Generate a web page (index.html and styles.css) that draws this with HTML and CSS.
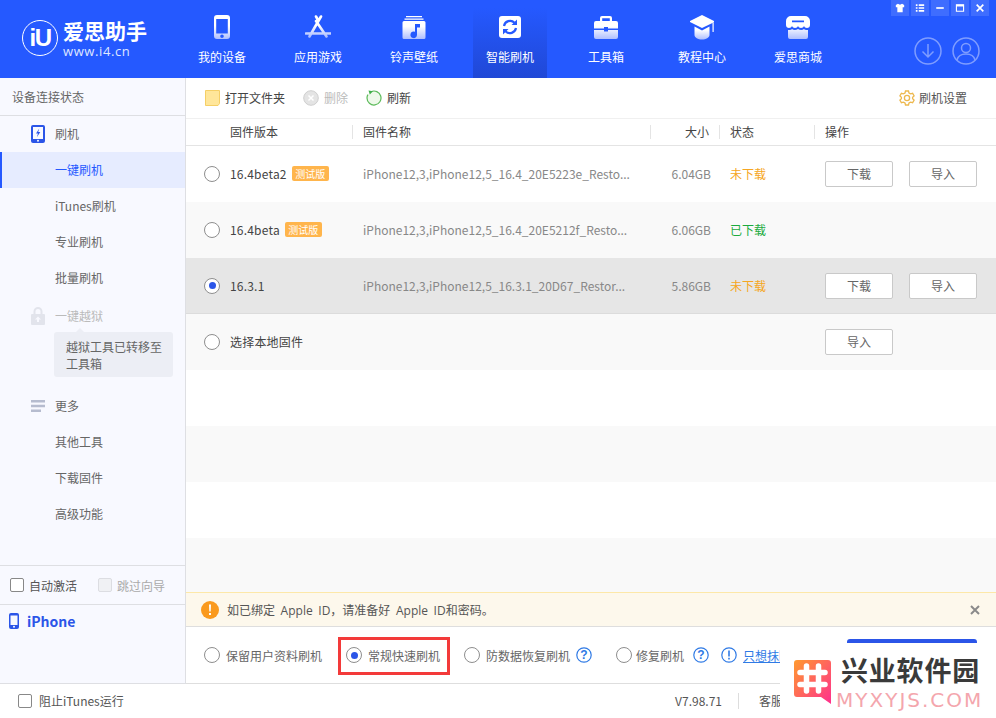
FILE: index.html
```html
<!DOCTYPE html>
<html lang="zh-CN">
<head>
<meta charset="utf-8">
<title>爱思助手</title>
<link rel="stylesheet" href="styles.css">
</head>
<body>
<svg class="defs" width="0" height="0" aria-hidden="true">
  <defs>
    <linearGradient id="navg" x1="0" y1="0" x2="0" y2="1">
      <stop offset="0" stop-color="#ffffff"/>
      <stop offset="0.45" stop-color="#ffffff"/>
      <stop offset="1" stop-color="#aebfff"/>
    </linearGradient>
    <linearGradient id="logog" x1="0" y1="0" x2="1" y2="1">
      <stop offset="0" stop-color="#ff9a2e"/>
      <stop offset="1" stop-color="#ff2f8e"/>
    </linearGradient>
  </defs>
</svg>
<div class="app">
  <header class="topbar">
    <div class="brand">
      <div class="brand-mark"><span>iU</span></div>
      <div class="brand-text">
        <div class="brand-name">爱思助手</div>
        <div class="brand-url">www.i4.cn</div>
      </div>
    </div>
    <nav class="nav">
      <a class="nav-item">
        <svg class="nav-icon" viewBox="0 0 26 26"><path fill="url(#navg)" fill-rule="evenodd" d="M8 1h10a3 3 0 0 1 3 3v18a3 3 0 0 1-3 3H8a3 3 0 0 1-3-3V4a3 3 0 0 1 3-3zm-.8 4v14.500h11.600V5zM13 20.500a1.800 1.800 0 1 0 0 3.600 1.800 1.800 0 0 0 0-3.600z"/></svg>
        <span>我的设备</span>
      </a>
      <a class="nav-item">
        <svg class="nav-icon" viewBox="0 0 26 26"><path fill="none" stroke="url(#navg)" stroke-width="2.600" stroke-linecap="round" d="M11 2.500L13.500 7M16 2.500L4.500 22.500M11 7l10.500 15.500M1 19.500h24.500"/></svg>
        <span>应用游戏</span>
      </a>
      <a class="nav-item">
        <svg class="nav-icon" viewBox="0 0 26 26"><path fill="url(#navg)" fill-rule="evenodd" d="M5 2h16v1.200H5zM3.500 4.500h19v1.200h-19zM3 7h20a1.500 1.500 0 0 1 1.500 1.500v15A1.500 1.500 0 0 1 23 25H3a1.500 1.500 0 0 1-1.500-1.500v-15A1.500 1.500 0 0 1 3 7zm11 3v7.800a3.300 3.300 0 1 0 2 3V13.500h3V10z"/></svg>
        <span>铃声壁纸</span>
      </a>
      <a class="nav-item is-active">
        <svg class="nav-icon" viewBox="0 0 26 26"><rect x="2" y="2" width="22" height="22" rx="3" fill="#fff"/><path fill="none" stroke="#2559ff" stroke-width="2.200" d="M7 12a6.200 6.200 0 0 1 10.500-3.300M19 14a6.200 6.200 0 0 1-10.500 3.300"/><path fill="#2559ff" d="M20 5.500v5.500h-5.500zM6 20.500V15h5.500z"/></svg>
        <span>智能刷机</span>
      </a>
      <a class="nav-item">
        <svg class="nav-icon" viewBox="0 0 26 26"><path fill="url(#navg)" fill-rule="evenodd" d="M9 2h8a2 2 0 0 1 2 2v3h4a2 2 0 0 1 2 2v5.500H15v-1.500h-4v1.500H1V9a2 2 0 0 1 2-2h4V4a2 2 0 0 1 2-2zm.2 2.200V7h7.600V4.200zM1 16h10v1.500h4V16h10v7a2 2 0 0 1-2 2H3a2 2 0 0 1-2-2z"/></svg>
        <span>工具箱</span>
      </a>
      <a class="nav-item">
        <svg class="nav-icon" viewBox="0 0 26 26"><path fill="#fff" d="M13 1l12 6v1.200L13 14 1 8V7z"/><path fill="url(#navg)" d="M5.500 12.500L13 16.500l7.500-4V21c0 2.500-3.500 4.500-7.500 4.500S5.500 23.500 5.500 21zM23.500 9l1.200-.6V18h-1.200z"/></svg>
        <span>教程中心</span>
      </a>
      <a class="nav-item">
        <svg class="nav-icon" viewBox="0 0 26 26"><path fill="url(#navg)" fill-rule="evenodd" d="M6 2h14a5 5 0 0 1 5 5v4c0 1.700-1.300 3-3 3s-2.500-1-3-2c-.5 1-1.500 2-3 2s-2.500-1-3-2c-.5 1-1.500 2-3 2s-2.500-1-3-2c-.5 1-1.300 2-3 2s-3-1.300-3-3V7a5 5 0 0 1 5-5zm1 4.500V8.300h12V6.500zM3 16c2 .3 3.300-.3 4-1 1.500 1.300 4 1.300 6 0 2 1.300 4.500 1.300 6 0 .7.700 2 1.300 4 1v7a2 2 0 0 1-2 2H5a2 2 0 0 1-2-2z"/></svg>
        <span>爱思商城</span>
      </a>
    </nav>
    <div class="win-buttons">
      <button class="win-btn"><svg viewBox="0 0 12 12"><path fill="#fff" d="M3.500 1L1 2.500v2.700h1.800V11h6.400V5.200H11V2.500L8.500 1 6 2.200z"/></svg></button>
      <button class="win-btn"><svg viewBox="0 0 12 12"><path fill="#fff" d="M1 1.500h2v2H1zM4.500 1.500H11v2H4.500zM1 5h2v2H1zM4.500 5H11v2H4.500zM1 8.500h2v2H1zM4.500 8.500H11v2H4.500z"/></svg></button>
      <button class="win-btn"><svg viewBox="0 0 12 12"><path fill="#fff" d="M1.500 5h9v2h-9z"/></svg></button>
      <button class="win-btn"><svg viewBox="0 0 12 12"><path fill="none" stroke="#fff" stroke-width="1.300" d="M1.700 2.200h8.600v7.800H1.700z"/><path fill="#fff" d="M1.500 2h9v2.200h-9z"/></svg></button>
      <button class="win-btn"><svg viewBox="0 0 12 12"><path stroke="#fff" stroke-width="2" d="M2 2l8 8M10 2l-8 8"/></svg></button>
    </div>
    <div class="top-actions">
      <svg class="round-icon" viewBox="0 0 28 28"><circle cx="14" cy="14" r="13" fill="none" stroke="#7f9dff" stroke-width="1.500"/><path fill="none" stroke="#7f9dff" stroke-width="1.500" d="M14 7v13M8.500 14.500L14 20l5.500-5.500"/></svg>
      <svg class="round-icon" viewBox="0 0 28 28"><circle cx="14" cy="14" r="13" fill="none" stroke="#7f9dff" stroke-width="1.500"/><circle cx="14" cy="11" r="4.500" fill="none" stroke="#7f9dff" stroke-width="1.500"/><path fill="none" stroke="#7f9dff" stroke-width="1.500" d="M5 23c1-4 4.500-6 9-6s8 2 9 6"/></svg>
    </div>
  </header>

  <div class="main">
    <aside class="sidebar">
      <div class="side-head">设备连接状态</div>
      <div class="side-item side-group">
        <svg class="side-icon" viewBox="0 0 14 18"><path fill="#2b55e8" fill-rule="evenodd" d="M2 0h10a2 2 0 0 1 2 2v14a2 2 0 0 1-2 2H2a2 2 0 0 1-2-2V2a2 2 0 0 1 2-2zm0 2v12h10V2zm5 12.800a1 1 0 1 0 0 2 1 1 0 0 0 0-2z"/><path fill="#2b55e8" d="M8.300 3.500L5 8.500h2L5.800 12.300 9.300 7H7.200z"/></svg>
        <span>刷机</span>
      </div>
      <div class="side-item is-current">一键刷机</div>
      <div class="side-item">iTunes刷机</div>
      <div class="side-item">专业刷机</div>
      <div class="side-item">批量刷机</div>
      <div class="side-item side-group side-disabled">
        <svg class="side-icon" viewBox="0 0 14 18"><path fill="#e2e4ec" fill-rule="evenodd" d="M7 0a4.500 4.500 0 0 1 4.500 4.500V7H13a1 1 0 0 1 1 1v9a1 1 0 0 1-1 1H1a1 1 0 0 1-1-1V8a1 1 0 0 1 1-1h1.500V4.500A4.500 4.500 0 0 1 7 0zm0 2a2.500 2.500 0 0 0-2.500 2.500V7h5V4.500A2.500 2.500 0 0 0 7 2zm0 7.500L4 12.500h2V15h2v-2.500h2z"/></svg>
        <span>一键越狱</span>
      </div>
      <div class="side-tip">越狱工具已转移至工具箱</div>
      <div class="side-item side-group">
        <svg class="side-icon" viewBox="0 0 14 14"><path fill="#b6bccf" d="M0 1h14v2.400H0zM0 5.800h14v2.400H0zM0 10.600h10v2.400H0z"/></svg>
        <span>更多</span>
      </div>
      <div class="side-item">其他工具</div>
      <div class="side-item">下载固件</div>
      <div class="side-item">高级功能</div>
      <div class="side-spacer"></div>
      <div class="side-checks">
        <label class="check-label"><i class="check"></i>自动激活</label>
        <label class="check-label is-off"><i class="check"></i>跳过向导</label>
      </div>
      <div class="side-device">
        <svg class="device-icon" viewBox="0 0 10 16"><path fill="#2b55e8" fill-rule="evenodd" d="M2 0h6a2 2 0 0 1 2 2v12a2 2 0 0 1-2 2H2a2 2 0 0 1-2-2V2a2 2 0 0 1 2-2zm-.5 2.500v9.500h7V2.500zM5 12.800a1 1 0 1 0 0 2 1 1 0 0 0 0-2z"/></svg>
        <span>iPhone</span>
      </div>
    </aside>

    <section class="content">
      <div class="toolbar">
        <a class="tool">
          <svg class="tool-icon folder" viewBox="0 0 15 16"><path fill="#ffe69a" stroke="#f5cf66" d="M.5.500h14v13l-1.500 2H.5z"/></svg>
          <span>打开文件夹</span>
        </a>
        <a class="tool is-off">
          <svg class="tool-icon" viewBox="0 0 16 16"><circle cx="8" cy="8" r="7.300" fill="#e4e4e4" stroke="#cfcfcf"/><path stroke="#fff" stroke-width="1.500" d="M5.500 5.500l5 5M10.500 5.500l-5 5"/></svg>
          <span>删除</span>
        </a>
        <a class="tool">
          <svg class="tool-icon" viewBox="0 0 16 16"><path fill="#eef9ea" stroke="#5cba5a" stroke-width="1.200" d="M5 1.700A7 7 0 1 1 1 8a7 7 0 0 1 .9-3.400"/><path fill="#3fae4a" d="M2.500 .4L7 1.200 3.800 4.600z"/></svg>
          <span>刷新</span>
        </a>
        <a class="tool tool-right">
          <svg class="tool-icon" viewBox="0 0 16 16"><path fill="none" stroke="#edb84e" stroke-width="1.300" d="M6.500 1h3l.5 2 1.600.9 2-.6 1.500 2.600-1.500 1.400v1.400l1.500 1.400-1.500 2.600-2-.6-1.600.9-.5 2h-3l-.5-2-1.600-.9-2 .6L.9 10.100l1.500-1.400V7.300L.9 5.900l1.500-2.600 2 .6L6 3z"/><circle cx="8" cy="8" r="2.600" fill="none" stroke="#edb84e" stroke-width="1.300"/></svg>
          <span>刷机设置</span>
        </a>
      </div>

      <div class="thead">
        <div class="th"><span class="th-pad">固件版本</span></div>
        <div class="th th-sep">固件名称</div>
        <div class="th th-sep th-right">大小</div>
        <div class="th th-sep">状态</div>
        <div class="th th-sep">操作</div>
      </div>

      <div class="rows">
        <div class="row">
          <div class="cell cell-ver"><i class="radio"></i><span>16.4beta2</span><em class="tag">测试版</em></div>
          <div class="cell cell-name">iPhone12,3,iPhone12,5_16.4_20E5223e_Resto...</div>
          <div class="cell cell-size">6.04GB</div>
          <div class="cell cell-status warn">未下载</div>
          <div class="cell cell-ops"><button class="btn">下载</button><button class="btn">导入</button></div>
        </div>
        <div class="row alt">
          <div class="cell cell-ver"><i class="radio"></i><span>16.4beta</span><em class="tag">测试版</em></div>
          <div class="cell cell-name">iPhone12,3,iPhone12,5_16.4_20E5212f_Resto...</div>
          <div class="cell cell-size">6.06GB</div>
          <div class="cell cell-status ok">已下载</div>
          <div class="cell cell-ops"></div>
        </div>
        <div class="row selected">
          <div class="cell cell-ver"><i class="radio is-on"></i><span>16.3.1</span></div>
          <div class="cell cell-name">iPhone12,3,iPhone12,5_16.3.1_20D67_Restor...</div>
          <div class="cell cell-size">5.86GB</div>
          <div class="cell cell-status warn">未下载</div>
          <div class="cell cell-ops"><button class="btn">下载</button><button class="btn">导入</button></div>
        </div>
        <div class="row alt">
          <div class="cell cell-ver"><i class="radio"></i><span>选择本地固件</span></div>
          <div class="cell cell-name"></div>
          <div class="cell cell-size"></div>
          <div class="cell cell-status"></div>
          <div class="cell cell-ops"><button class="btn">导入</button></div>
        </div>
        <div class="row"></div>
        <div class="row alt"></div>
        <div class="row"></div>
        <div class="row alt"></div>
      </div>

      <div class="notice">
        <svg class="notice-icon" viewBox="0 0 18 18"><circle cx="9" cy="9" r="9" fill="#fa9a1e"/><path fill="#fff" d="M8 3.500h2l-.3 7H8.300zM8 12h2v2H8z"/></svg>
        <span class="notice-text">如已绑定 Apple ID，请准备好 Apple ID和密码。</span>
        <svg class="notice-close" viewBox="0 0 10 10"><path stroke="#8a8a8a" stroke-width="2" d="M1 1l8 8M9 1l-8 8"/></svg>
      </div>

      <div class="modes">
        <label class="mode"><i class="radio"></i>保留用户资料刷机</label>
        <label class="mode mode-picked"><i class="radio is-on"></i>常规快速刷机</label>
        <label class="mode mode-data"><i class="radio"></i>防数据恢复刷机</label>
        <svg class="help" viewBox="0 0 16 16"><circle cx="8" cy="8" r="7.200" fill="none" stroke="#2f7ae5" stroke-width="1.200"/><text x="8" y="12" text-anchor="middle" class="help-glyph">?</text></svg>
        <label class="mode mode-fix"><i class="radio"></i>修复刷机</label>
        <svg class="help" viewBox="0 0 16 16"><circle cx="8" cy="8" r="7.200" fill="none" stroke="#2f7ae5" stroke-width="1.200"/><text x="8" y="12" text-anchor="middle" class="help-glyph">?</text></svg>
        <svg class="help help-info" viewBox="0 0 16 16"><circle cx="8" cy="8" r="7.200" fill="none" stroke="#2f7ae5" stroke-width="1.200"/><path fill="#2f7ae5" d="M7.200 3.500h1.600v6H7.200zM7.200 10.700h1.600v1.700H7.200z"/></svg>
        <a class="erase-link">只想抹除数据</a>
        <div class="flash-btn"></div>
      </div>
    </section>
  </div>

  <footer class="statusbar">
    <label class="check-label foot-check"><i class="check"></i>阻止iTunes运行</label>
    <span class="version">V7.98.71</span>
    <span class="service">客服</span>
  </footer>

  <div class="watermark">
    <svg class="wm-logo" viewBox="0 0 37 44">
      <path fill="url(#logog)" d="M3 0h31a3 3 0 0 1 3 3v41l-10-7H3a3 3 0 0 1-3-3V3a3 3 0 0 1 3-3z"/>
      <path stroke="#fff" stroke-width="5.500" stroke-linecap="round" fill="none" d="M12.500 6v25M24.500 6v25M6 12.500h25M6 24.500h25"/>
    </svg>
    <div class="wm-text">
      <div class="wm-cn">兴业软件园</div>
      <div class="wm-en">MYXYJS.COM</div>
    </div>
  </div>
</div>
</body>
</html>
```
FILE: styles.css
```css
* { box-sizing: border-box; }
html, body { margin: 0; padding: 0; }
body {
  width: 996px;
  height: 718px;
  overflow: hidden;
  font-family: "Noto Sans CJK SC", "Noto Sans", sans-serif;
  font-size: 12px;
  color: #444;
  background: #fff;
}
i, em { font-style: normal; }
.defs { position: absolute; }
.app { position: relative; display: flex; flex-direction: column; width: 996px; height: 718px; overflow: hidden; }

/* header */
.topbar { position: relative; display: flex; flex: 0 0 78px; height: 78px; background: #2559ff; color: #fff; }
.brand { display: flex; flex: 0 0 185px; align-items: flex-start; padding: 20px 0 0 22px; }
.brand-mark {
  display: flex; align-items: center; justify-content: center;
  width: 36px; height: 36px; border: 1.500px solid #fff; border-radius: 50%;
  font: 700 24px/1 "Liberation Sans", sans-serif; letter-spacing: -1.500px;
}
.brand-text { margin-left: 5px; }
.brand-name { height: 25px; font-family: "Liberation Sans", "Noto Sans CJK SC", sans-serif; font-size: 21px; font-weight: 700; line-height: 24px; }
.brand-url { font: 13px/13px "Open Sans", sans-serif; letter-spacing: .6px; color: #dfe6ff; }
.nav { display: flex; gap: 22px; }
.nav-item { display: flex; flex-direction: column; align-items: center; width: 74px; height: 78px; padding-top: 14px; font-size: 12px; color: #fff; }
.nav-item.is-active { background: linear-gradient(#2559ff 10%, #2048d6); }
.nav-icon { display: block; width: 26px; height: 26px; margin-bottom: 8px; }
.nav-item span { line-height: 18px; }
.win-buttons { position: absolute; top: 0; right: 7px; display: flex; gap: 2px; }
.win-btn { display: flex; align-items: center; justify-content: center; width: 18px; height: 16px; padding: 0; border: 0; background: #3f6dff; }
.win-btn svg { width: 10px; height: 10px; }
.top-actions { position: absolute; top: 37px; right: 16px; display: flex; gap: 10px; }
.round-icon { display: block; width: 28px; height: 28px; }

/* layout */
.main { display: flex; flex: 0 0 606px; height: 606px; }

/* sidebar */
.sidebar { display: flex; flex-direction: column; flex: 0 0 186px; background: #f8f9ff; border-right: 1px solid #dedfe3; border-bottom: 1px solid #dedfe3; color: #666; }
.side-head { flex: 0 0 37px; padding: 0 12px; line-height: 37px; font-size: 12px; border-bottom: 1px solid #dedfe3; color: #666; }
.side-item { position: relative; flex: 0 0 36px; padding: 1px 0 0 55px; line-height: 34px; }
.side-group { display: flex; align-items: center; padding-top: 0; }
.side-icon { position: absolute; left: 31px; top: 9px; width: 14px; height: 18px; }
.is-current { background: #e6ecff; color: #2559ff; border-left: 2px solid #2559ff; padding-left: 53px; }
.side-disabled { margin-top: 2px; color: #bbb; }
.side-tip { position: relative; flex: 0 0 45px; width: 119px; margin: -2px 0 11px 54px; padding: 6px 10px 0 12px; line-height: 17px; background: #eceef5; border-radius: 3px; }
.side-tip::before { content: ""; position: absolute; left: 22px; top: -4px; border: 4px solid transparent; border-top: 0; border-bottom-color: #eceef5; }
.side-spacer { flex: 1; }
.side-checks { display: flex; flex: 0 0 40px; align-items: center; gap: 21px; padding-left: 10px; border-top: 1px solid #dedfe3; border-bottom: 1px solid #dedfe3; }
.check-label { display: flex; align-items: center; gap: 5px; color: #555; }
.check-label.is-off { color: #aaa; }
.check { display: block; width: 14px; height: 14px; background: #fff; border: 1px solid #888; border-radius: 2px; }
.is-off .check { background: #f0f1f4; border-color: #dcdde2; }
.side-device { display: flex; flex: 0 0 78px; align-items: flex-start; gap: 8px; padding: 7px 0 0 9px; font-size: 14px; font-weight: 700; line-height: 18px; color: #2b55e8; }
.device-icon { width: 10px; height: 16px; margin-top: 1px; }

/* content */
.content { position: relative; display: flex; flex-direction: column; flex: 1; min-width: 0; }
.toolbar { display: flex; flex: 0 0 41px; align-items: center; gap: 18px; padding: 0 29px 1px 19px; border-bottom: 1px solid #f0f0f0; }
.tool { display: flex; align-items: center; gap: 5px; color: #444; }
.tool.is-off { color: #bbb; }
.tool-right { margin-left: auto; gap: 4px; color: #555; }
.tool-icon { display: block; width: 16px; height: 16px; }
.tool-icon.folder { width: 15px; }
.thead { display: grid; grid-template-columns: 166px 298px 69px 95px 1fr; flex: 0 0 27px; align-items: center; border-bottom: 1px solid #e4e4e4; color: #444; padding-bottom: 1px; }
.th { padding-left: 10px; line-height: 14px; }
.th-pad { padding-left: 34px; }
.th-sep { border-left: 1px solid #e4e4e4; height: 14px; }
.th-right { padding-right: 10px; text-align: right; }
.rows { flex: 1; min-height: 0; overflow: hidden; }
.row { display: grid; grid-template-columns: 166px 298px 69px 95px 1fr; align-items: center; height: 56px; padding-bottom: 1px; }
.row.alt { background: #f9f9f9; }
.row.selected { padding-bottom: 0; background: #e6e6e6; border-bottom: 1px solid #dcdcdc; }
.cell-ver { display: flex; align-items: center; padding-left: 18px; color: #444; }
.cell-ver span { letter-spacing: .2px; }
.cell-ver .radio { margin-right: 10px; }
.tag { margin-left: 5px; width: 37px; height: 15px; background: #ffb54c; border-radius: 2px; color: #fff; font-size: 10px; line-height: 15px; text-align: center; }
.cell-name { padding-left: 11px; color: #888; white-space: nowrap; }
.cell-size { padding-right: 8px; text-align: right; color: #888; }
.cell-status { padding-left: 11px; }
.warn { color: #f5a623; }
.ok { color: #1cab3f; }
.cell-ops { display: flex; gap: 16px; padding-left: 11px; }
.btn { width: 68px; height: 26px; padding: 0; background: #fff; border: 1px solid #c9c9c9; border-radius: 2px; color: #666; font: inherit; }
.radio { position: relative; display: block; flex: none; width: 16px; height: 16px; background: #fff; border: 1px solid #8e8e8e; border-radius: 50%; }
.radio.is-on::after { content: ""; position: absolute; left: 3.500px; top: 3.500px; width: 7px; height: 7px; background: #2b55e8; border-radius: 50%; }

.notice { display: flex; flex: 0 0 35px; align-items: center; padding: 0 16px 0 15px; background: #fdf8ec; border-top: 1px solid #fde8a8; border-bottom: 1px solid #dedede; }
.notice-icon { width: 18px; height: 18px; margin-right: 8px; }
.notice-text { flex: 1; font-family: "Open Sans", "Noto Sans CJK SC", sans-serif; word-spacing: 2.500px; color: #555; }
.notice-close { width: 10px; height: 10px; }
.modes { position: relative; display: flex; flex: 0 0 57px; align-items: center; padding: 0 0 0 18px; border-bottom: 1px solid #dedede; color: #666; white-space: nowrap; overflow: hidden; }
.mode { display: flex; align-items: center; gap: 6px; }
.mode-picked { width: 112px; height: 38px; margin: 2px 14px 0 16px; padding: 0 0 2px 5px; border: 3px solid #f33a3a; }
.mode-data { margin-right: 6px; }
.help { flex: none; width: 16px; height: 16px; }
.help-glyph { font: 700 12px "Liberation Sans", sans-serif; fill: #2f7ae5; }
.mode-fix { margin: 0 9px 0 24px; gap: 4px; }
.help-info { margin-left: 12px; }
.erase-link { margin-left: 6px; color: #2f7ae5; text-decoration: underline; }
.flash-btn { position: absolute; left: 661px; top: 12px; width: 130px; height: 40px; background: #2b55e8; border-radius: 3px; }

/* footer */
.statusbar { display: flex; flex: 1; align-items: center; padding: 0 0 1px 18px; background: #fff; }
.foot-check { gap: 7px; }
.version { margin-left: auto; padding-right: 16px; border-right: 1px solid #ddd; color: #555; line-height: 16px; }
.service { margin: 0 213px 0 20px; color: #555; }

/* watermark overlay */
.watermark { position: absolute; left: 780px; top: 643px; display: flex; width: 216px; height: 75px; padding: 17px 0 0 14px; background: #fff; }
.wm-logo { flex: none; width: 37px; height: 44px; }
.wm-text { margin-left: 10px; }
.wm-cn { height: 25px; font-family: "Liberation Sans", "Noto Sans CJK SC", sans-serif; font-size: 27px; font-weight: 700; line-height: 24px; color: #3a3a3a; letter-spacing: .8px; white-space: nowrap; }
.wm-en { margin: 5px 0 0 -5px; font: 20px/20px "DejaVu Sans", sans-serif; color: #f4a6ad; letter-spacing: 2px; white-space: nowrap; }
```
